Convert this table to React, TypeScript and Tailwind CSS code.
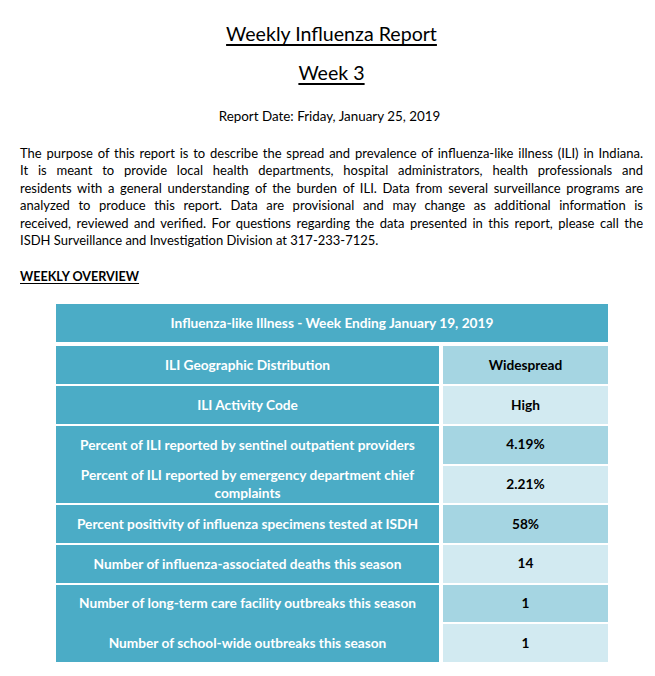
const lines = [
  "The purpose of this report is to describe the spread and prevalence of influenza-like illness (ILI) in Indiana.",
  "It is meant to provide local health departments, hospital administrators, health professionals and",
  "residents with a general understanding of the burden of ILI. Data from several surveillance programs are",
  "analyzed to produce this report. Data are provisional and may change as additional information is",
  "received, reviewed and verified. For questions regarding the data presented in this report, please call the",
];

interface Row {
  label: string[];
  value: string;
  dark: boolean;
  joined?: boolean;
}

const rows: Row[] = [
  { label: ["ILI Geographic Distribution"], value: "Widespread", dark: true },
  { label: ["ILI Activity Code"], value: "High", dark: false },
  { label: ["Percent of ILI reported by sentinel outpatient providers"], value: "4.19%", dark: true },
  {
    label: ["Percent of ILI reported by emergency department chief", "complaints"],
    value: "2.21%",
    dark: false,
    joined: true,
  },
  { label: ["Percent positivity of influenza specimens tested at ISDH"], value: "58%", dark: true },
  { label: ["Number of influenza-associated deaths this season"], value: "14", dark: false },
  { label: ["Number of long-term care facility outbreaks this season"], value: "1", dark: true },
  { label: ["Number of school-wide outbreaks this season"], value: "1", dark: false, joined: true },
];

export default function App() {
  return (
    <div className="min-h-[676px] w-[655px] bg-white pl-[20px] pr-[12px] pt-[21px] text-black font-['Lato',sans-serif]">
      <h1 className="text-center text-[19.6px] leading-[26px] underline underline-offset-[3px] decoration-[1.5px]">
        Weekly Influenza Report
      </h1>
      <h2 className="mt-[13px] text-center text-[19.6px] leading-[26px] underline underline-offset-[3px] decoration-[1.5px]">
        Week 3
      </h2>
      <p className="mt-[22px] -ml-[4px] text-center text-[13.4px] leading-[17px]">
        Report Date: Friday, January 25, 2019
      </p>

      <div className="mt-[20px] text-[13px] leading-[17.4px]">
        {lines.map((line) => (
          <p key={line} className="text-justify [text-align-last:justify]">
            {line}
          </p>
        ))}
        <p>ISDH Surveillance and Investigation Division at 317-233-7125.</p>
      </div>

      <p className="mt-[19px] text-[12.6px] leading-[17px] font-bold underline underline-offset-[2px]">
        WEEKLY OVERVIEW
      </p>

      <div className="mt-[19px] ml-[36px] w-[552px] text-[13.7px] font-bold">
        <div className="flex h-[38px] items-center justify-center bg-[#4bacc6] text-white">
          Influenza-like Illness - Week Ending January 19, 2019
        </div>
        <div className="mt-[4px] flex flex-col gap-[2px]">
          {rows.map((row) => (
            <div key={row.value + row.label[0]} className="flex h-[37.7px] gap-[4px]">
              <div
                className={`flex w-[383px] flex-col items-center justify-center bg-[#4bacc6] text-center leading-[18px] text-white ${
                  row.joined ? "-mt-[2px] pt-[2px]" : ""
                }`}
              >
                {row.label.map((l) => (
                  <span key={l}>{l}</span>
                ))}
              </div>
              <div
                className={`flex flex-1 items-center justify-center ${
                  row.dark ? "bg-[#a5d5e2]" : "bg-[#d2eaf1]"
                }`}
              >
                {row.value}
              </div>
            </div>
          ))}
        </div>
      </div>
    </div>
  );
}
